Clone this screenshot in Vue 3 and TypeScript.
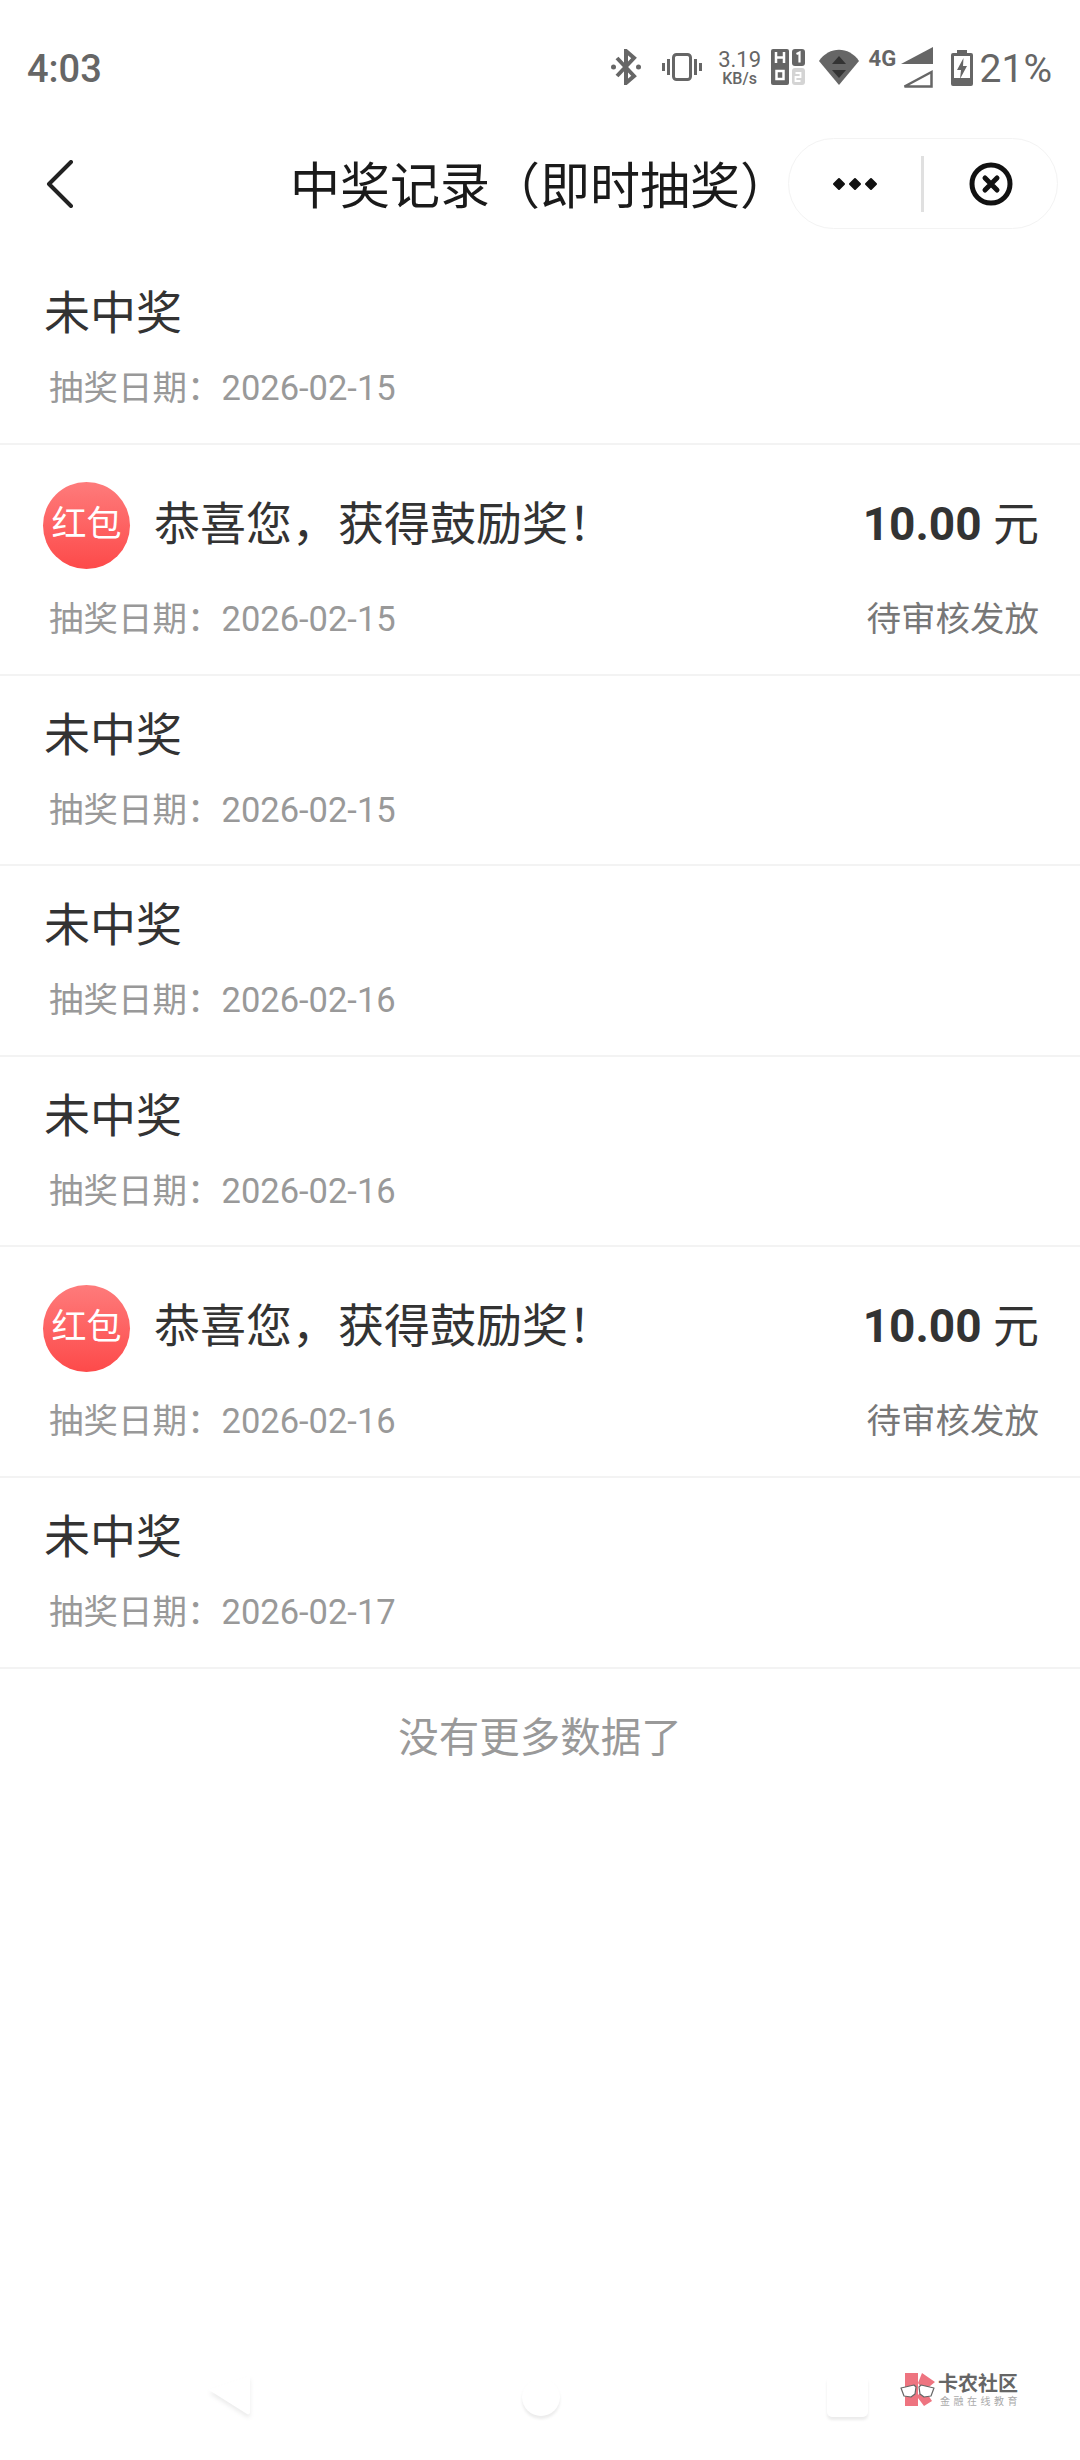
<script setup lang="ts">
interface DrawRecord {
  date: string;
  won: boolean;
}

const records: DrawRecord[] = [
  { date: "2026-02-15", won: false },
  { date: "2026-02-15", won: true },
  { date: "2026-02-15", won: false },
  { date: "2026-02-16", won: false },
  { date: "2026-02-16", won: false },
  { date: "2026-02-16", won: true },
  { date: "2026-02-17", won: false },
];
</script>

<template>
  <div class="page">
    <div class="status-bar">
      <span class="clock">4:03</span>
      <div class="status-icons">
        <svg class="ic-bt" viewBox="0 0 30 36" fill="none" stroke="#666" stroke-width="4">
          <path d="M6 9l17 18-8 7V2l8 7L6 27" />
          <circle cx="2.5" cy="18" r="2.5" fill="#666" stroke="none" />
          <circle cx="27.5" cy="18" r="2.5" fill="#666" stroke="none" />
        </svg>
        <svg class="ic-vib" viewBox="0 0 40 28">
          <rect x="11.5" y="1.5" width="17" height="25" rx="3" fill="none" stroke="#666" stroke-width="3" />
          <path d="M0 10h3v8H0zM5 6h3v16H5zM32 6h3v16h-3zM37 10h3v8h-3z" fill="#666" />
        </svg>
        <div class="speed">
          <span class="speed-num">3.19</span>
          <span class="speed-unit">KB/s</span>
        </div>
        <svg class="ic-sim" viewBox="0 0 34 36">
          <rect width="18" height="36" rx="2" fill="#666" />
          <path d="M5 3v11M13 3v11M5 8.5h8" stroke="#fff" stroke-width="2.5" fill="none" />
          <rect x="5.5" y="22" width="7" height="8" fill="none" stroke="#fff" stroke-width="2.5" />
          <rect x="21" width="13" height="17" rx="3" fill="#666" />
          <path d="M25.5 5l3-1.5v10" stroke="#fff" stroke-width="2.2" fill="none" />
          <rect x="21" y="19" width="13" height="17" rx="3" fill="#d4d4d4" />
          <path d="M24.5 24h5v4h-5v4h5" stroke="#fff" stroke-width="1.8" fill="none" />
        </svg>
        <svg class="ic-wifi" viewBox="0 0 40 36">
          <path d="M0 12C10 -3 30 -3 40 12L20 36z" fill="#666" />
          <path d="M20 7l7 8H13zM20 29l-7-8h14z" fill="#333" />
        </svg>
        <div class="net">
          <span class="net-label">4G</span>
          <svg class="ic-signal" viewBox="0 0 32 41">
            <path d="M0 17L32 0v17z" fill="#666" />
            <path d="M3.5 39.5L30.5 25v14.5z" fill="none" stroke="#666" stroke-width="2.5" />
          </svg>
        </div>
        <svg class="ic-batt" viewBox="0 0 22 36">
          <path d="M6 0h10v3h4a2 2 0 0 1 2 2v29a2 2 0 0 1-2 2H2a2 2 0 0 1-2-2V5a2 2 0 0 1 2-2h4z" fill="#666" />
          <rect x="3" y="6" width="16" height="25" fill="#fff" />
          <path d="M3 28h16v3H3z" fill="#666" />
          <path d="M12.5 8L6 20h4l-1 9 7-13h-4z" fill="#666" />
        </svg>
        <span class="batt-pct">21%</span>
      </div>
    </div>

    <div class="nav-bar">
      <div class="nav-left">
        <svg class="ic-back" viewBox="0 0 28 48" fill="none" stroke="#222" stroke-width="4" stroke-linecap="round" stroke-linejoin="round">
          <path d="M25 2L3 24l22 22" />
        </svg>
      </div>
      <div class="nav-title">中奖记录（即时抽奖）</div>
      <div class="capsule">
        <svg class="ic-more" viewBox="0 0 46 14" fill="#111" stroke="#111" stroke-width="2" stroke-linejoin="round">
          <path d="M7 2l5 5-5 5-5-5zM23 2l5 5-5 5-5-5zM39 2l5 5-5 5-5-5z" />
        </svg>
        <span class="capsule-line"></span>
        <svg class="ic-close" viewBox="0 0 44 44" fill="none" stroke="#111">
          <circle cx="22" cy="22" r="19" stroke-width="5" />
          <path d="M16 16l12 12M28 16L16 28" stroke-width="5" stroke-linecap="round" />
        </svg>
      </div>
    </div>

    <ul class="record-list">
      <li v-for="(item, i) in records" :key="i" class="record" :class="{ won: item.won }">
        <div class="record-top">
          <template v-if="item.won">
            <span class="badge">红包</span>
            <span class="prize-text">恭喜您，获得鼓励奖！</span>
            <span class="amount"><b>10.00</b> 元</span>
          </template>
          <span v-else class="no-prize">未中奖</span>
        </div>
        <div class="record-bottom">
          <span class="date">抽奖日期：{{ item.date }}</span>
          <span v-if="item.won" class="state">待审核发放</span>
        </div>
      </li>
    </ul>

    <div class="no-more">没有更多数据了</div>

    <div class="gesture-bar">
      <svg class="ghost ghost-back" viewBox="0 0 42 42">
        <path d="M0 14L38 38a2 2 0 0 0 3-2V0z" fill="#fff" />
      </svg>
      <span class="ghost ghost-home"></span>
      <span class="ghost ghost-square"></span>
    </div>

    <div class="watermark">
      <svg class="wm-logo" viewBox="0 0 36 34">
        <path d="M5 0h13v33H5zM18 10l4-10 13 9-11 9zM18 22l6-6 8 12-8 5-6-8z" fill="#ee7480" />
        <path d="M1 15l13-3 2 2-1 7-4 3-7-1zM19 14l2-2 13 3-3 8-7 1-4-3z" fill="#fff" stroke="#666" stroke-width="1.2" stroke-linejoin="round" />
      </svg>
      <div class="wm-text">
        <span class="wm-name">卡农社区</span>
        <span class="wm-sub">金融在线教育</span>
      </div>
    </div>
  </div>
</template>

<style>
html,
body {
  margin: 0;
  background: #fff;
}
</style>

<style scoped>
.page {
  position: relative;
  width: 1080px;
  height: 2460px;
  overflow: hidden;
  display: flex;
  flex-direction: column;
  background: #fff;
  font-family: Roboto, "Noto Sans CJK SC", sans-serif;
}

.status-bar {
  height: 138px;
  box-sizing: border-box;
  padding: 47px 28px 0 27px;
  display: flex;
  justify-content: space-between;
  align-items: flex-start;
  color: #666;
}

.clock {
  font-size: 38px;
  font-weight: 500;
  line-height: 44px;
}

.status-icons {
  display: flex;
  align-items: flex-start;
}

.ic-bt {
  width: 30px;
  height: 36px;
  margin-top: 2px;
}

.ic-vib {
  width: 40px;
  height: 28px;
  margin: 6px 0 0 21px;
}

.speed {
  width: 44px;
  margin: 2px 0 0 16px;
  display: flex;
  flex-direction: column;
  align-items: center;
}

.speed-num {
  font-size: 22px;
  line-height: 22px;
  white-space: nowrap;
}

.speed-unit {
  font-size: 16px;
  line-height: 16px;
  font-weight: 500;
  white-space: nowrap;
}

.ic-sim {
  width: 34px;
  height: 36px;
  margin: 2px 0 0 9px;
}

.ic-wifi {
  width: 40px;
  height: 36px;
  margin: 2px 0 0 14px;
}

.net {
  display: flex;
  align-items: flex-start;
  margin-left: 10px;
}

.net-label {
  font-size: 22px;
  font-weight: 700;
  line-height: 24px;
  width: 32px;
  color: #666;
}

.ic-signal {
  width: 32px;
  height: 41px;
}

.ic-batt {
  width: 22px;
  height: 36px;
  margin: 3px 0 0 18px;
}

.batt-pct {
  font-size: 39px;
  line-height: 44px;
  margin-left: 7px;
}

.nav-bar {
  height: 116px;
  display: grid;
  grid-template-columns: 290px 500px 1fr;
  align-items: center;
  box-sizing: border-box;
  padding-bottom: 25px;
}

.nav-left {
  padding-left: 46px;
}

.ic-back {
  display: block;
  width: 28px;
  height: 48px;
}

.nav-title {
  padding-top: 6px;
  font-size: 50px;
  line-height: 60px;
  color: #1a1a1a;
  white-space: nowrap;
}

.capsule {
  width: 270px;
  height: 91px;
  box-sizing: border-box;
  margin-left: -2px;
  border: 1.5px solid #f3f3f3;
  border-radius: 46px;
  display: flex;
  align-items: center;
  background: #fff;
}

.ic-more {
  width: 46px;
  height: 14px;
  margin-left: 43px;
}

.capsule-line {
  width: 3px;
  height: 56px;
  margin-left: 43px;
  background: #e0e0e0;
}

.ic-close {
  width: 44px;
  height: 44px;
  margin-left: 45px;
}

.record-list {
  list-style: none;
  margin: 0;
  padding: 0;
}

.record {
  height: 190.5px;
  box-sizing: border-box;
  border-bottom: 2px solid #f3f3f3;
  padding: 0 28px 0 44px;
}

.record.won {
  height: 231px;
  padding-right: 41px;
}

.record-top {
  height: 118px;
  display: flex;
  align-items: center;
}

.record.won .record-top {
  height: 162px;
}

.no-prize {
  font-size: 46px;
  line-height: 60px;
  color: #333;
}

.badge {
  width: 87px;
  height: 87px;
  margin-left: -1px;
  box-sizing: border-box;
  padding-bottom: 10px;
  border-radius: 50%;
  display: flex;
  align-items: center;
  justify-content: center;
  color: #fff;
  font-size: 35px;
  background: linear-gradient(180deg, #fe7b7b 0%, #fd4a4a 100%);
  flex-shrink: 0;
}

.prize-text {
  margin: 0 0 12px 24px;
  font-size: 46px;
  color: #333;
  flex: 1;
  white-space: nowrap;
}

.amount {
  margin-bottom: 12px;
  font-size: 46px;
  color: #333;
  white-space: nowrap;
}

.amount b {
  font-size: 46px;
  font-weight: 700;
}

.record-bottom {
  margin-top: -7px;
  display: flex;
  justify-content: space-between;
  align-items: center;
  height: 40px;
}

.record.won .record-bottom {
  margin-top: -11px;
}

.date {
  margin-left: 5px;
  font-size: 34.5px;
  color: #999;
}

.state {
  font-size: 34.5px;
  color: #777;
}

.no-more {
  margin-top: 44px;
  text-align: center;
  font-size: 40.5px;
  line-height: 50px;
  color: #999;
}

.gesture-bar {
  position: absolute;
  left: 0;
  right: 0;
  top: 2370px;
  height: 50px;
}

.ghost {
  position: absolute;
  display: block;
}

.ghost-back {
  left: 209px;
  top: 6px;
  width: 42px;
  height: 42px;
  filter: drop-shadow(0 3px 2px rgba(0, 0, 0, 0.08));
}

.ghost-home {
  left: 522px;
  top: 8px;
  width: 38px;
  height: 38px;
  border-radius: 50%;
  background: #fff;
  box-shadow: 0 3px 3px rgba(0, 0, 0, 0.08);
}

.ghost-square {
  left: 827px;
  top: 6px;
  width: 41px;
  height: 41px;
  border-radius: 5px;
  background: #fff;
  box-shadow: 0 3px 3px rgba(0, 0, 0, 0.08);
}

.watermark {
  position: absolute;
  left: 900px;
  top: 2373px;
  display: flex;
  gap: 2px;
}

.wm-logo {
  width: 36px;
  height: 34px;
}

.wm-text {
  display: flex;
  flex-direction: column;
  color: #666;
}

.wm-name {
  font-size: 20px;
  font-weight: 700;
  line-height: 22px;
  white-space: nowrap;
}

.wm-sub {
  margin: 1px 0 0 2px;
  font-size: 10px;
  line-height: 12px;
  letter-spacing: 3.5px;
  color: #aaa;
  white-space: nowrap;
}
</style>
